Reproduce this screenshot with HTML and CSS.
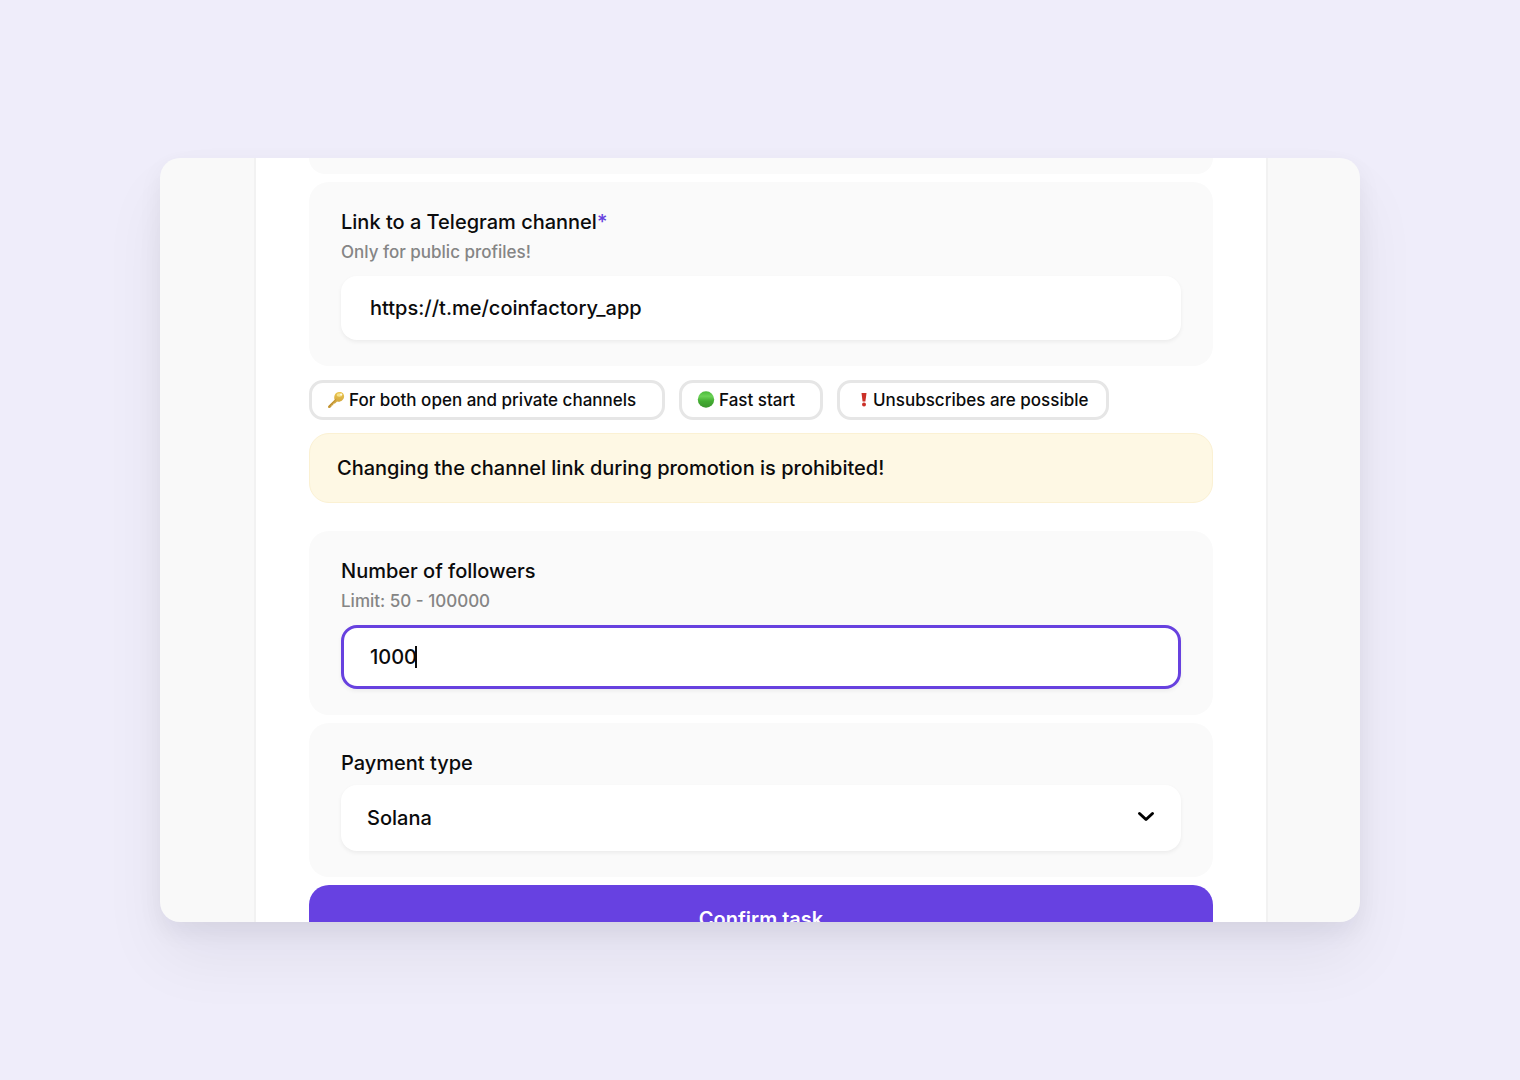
FILE: index.html
```html
<!DOCTYPE html>
<html lang="en">
<head>
<meta charset="utf-8">
<meta name="viewport" content="width=device-width, initial-scale=1">
<title>Promote a Telegram channel</title>
<link rel="stylesheet" href="styles.css">
</head>
<body>
<main class="window">
  <form class="column">
    <div class="panel panel-end"></div>
    <section class="panel">
      <label class="title" for="link">Link to a Telegram channel<span class="required">*</span></label>
      <p class="hint">Only for public profiles!</p>
      <input class="control" id="link" type="text" value="https://t.me/coinfactory_app">
    </section>
    <ul class="tags">
      <li class="tag">
        <svg class="icon" viewBox="0 0 18 18" aria-hidden="true">
          <defs><linearGradient id="gold" x1="0" y1="0" x2="0" y2="1"><stop offset="0" stop-color="#ecc64f"/><stop offset="1" stop-color="#c59635"/></linearGradient></defs>
          <path d="M1 15.200 7.600 8.700C6.400 5 8.400 1.300 12 1c3.200-.3 5.300 1.800 5.100 4.800-.3 3.400-3.700 5.700-7 4.800l-2.100 2-1.600.1-.2 1.500-1.500.2-.3 1.300-1.600 1.300-1.700-.2z" fill="url(#gold)"/>
          <path d="m2 15.300 7.200-7" stroke="#a97b2c" stroke-width=".7"/>
          <ellipse cx="12.400" cy="4" rx="2.800" ry="1.700" fill="#f7e38c"/>
          <circle cx="14.200" cy="3.500" r="1.100" fill="#fffbe6"/>
        </svg>
        For both open and private channels
      </li>
      <li class="tag">
        <svg class="icon" viewBox="0 0 18 18" aria-hidden="true">
          <defs><linearGradient id="green" x1="0" y1="0" x2="0" y2="1"><stop offset="0" stop-color="#49b83a"/><stop offset=".3" stop-color="#6bd256"/><stop offset=".6" stop-color="#43ac32"/><stop offset="1" stop-color="#3b962c"/></linearGradient></defs>
          <circle cx="9" cy="8.500" r="8.200" fill="url(#green)"/>
        </svg>
        Fast start
      </li>
      <li class="tag tag-tight">
        <svg class="icon" viewBox="0 0 18 18" aria-hidden="true">
          <path d="M6.500 2h5l-1.100 8.500H7.600z" fill="#cb3028"/>
          <circle cx="9" cy="13.400" r="2" fill="#cb3028"/>
        </svg>
        Unsubscribes are possible
      </li>
    </ul>
    <p class="notice">Changing the channel link during promotion is prohibited!</p>
    <section class="panel">
      <label class="title" for="count">Number of followers</label>
      <p class="hint">Limit: 50 - 100000</p>
      <div class="field">
        <input class="control active" id="count" type="text" inputmode="numeric" value="1000">
        <span class="caret"></span>
      </div>
    </section>
    <section class="panel">
      <label class="title title-only" for="payment">Payment type</label>
      <div class="field">
        <select class="control" id="payment"><option>Solana</option></select>
        <svg class="chevron" viewBox="0 0 18 12" aria-hidden="true"><path d="m2.500 2.500 6.500 6 6.500-6" fill="none" stroke="#000" stroke-width="3" stroke-linecap="round" stroke-linejoin="round"/></svg>
      </div>
    </section>
    <button class="submit" type="button">Confirm task</button>
  </form>
</main>
</body>
</html>
```
FILE: styles.css
```css
* {
  box-sizing: border-box;
}

body {
  display: flex;
  height: 100vh;
  margin: 0;
  padding: 158px 160px;
  background: #efedfa;
  color: #0b0b0c;
  font-family: Inter, "Liberation Sans", sans-serif;
  font-size: 20px;
  font-weight: 500;
  line-height: 24px;
}

.window {
  flex: 1;
  overflow: hidden;
  padding: 0 92px 0 94px;
  border-radius: 20px;
  background: #f9f9f9;
  box-shadow: 0 10px 24px rgba(20, 16, 30, 0.06), 0 36px 64px rgba(20, 16, 30, 0.06);
}

.column {
  display: flex;
  flex-direction: column;
  gap: 8px;
  padding: 0 53px;
  border: solid #f2f2f2;
  border-width: 0 2px;
  background: #fff;
}

.panel {
  display: flex;
  flex-direction: column;
  padding: 28px 32px 26px;
  border-radius: 20px;
  background: #fafafa;
}

.panel-end {
  height: 16px;
  padding: 0;
  border-radius: 0 0 20px 20px;
}

.title {
  margin-bottom: 6px;
}

.title-only {
  margin-bottom: 10px;
}

.required {
  color: #6741df;
}

.hint {
  margin: 0 0 12px;
  color: #858585;
  font-size: 17px;
}

.control {
  display: block;
  width: 100%;
  height: 64px;
  padding: 0 29px;
  border: 0;
  border-radius: 16px;
  outline: 0;
  background: #fff;
  box-shadow: 0 2px 4px rgba(0, 0, 0, 0.06);
  color: inherit;
  font: inherit;
}

.active {
  padding: 0 26px;
  border: 3px solid #6741df;
}

select.control {
  height: 66px;
  padding: 0 26px;
  appearance: none;
}

.field {
  position: relative;
}

.caret {
  position: absolute;
  top: 21px;
  left: 74px;
  width: 2px;
  height: 22px;
  background: #0b0b0c;
}

.chevron {
  position: absolute;
  top: 26px;
  right: 26px;
  width: 18px;
  height: 12px;
}

.tags {
  display: grid;
  grid-template-columns: 356px 144px 272px;
  gap: 14px;
  margin: 6px 0 5px;
  padding: 0;
  list-style: none;
}

.tag {
  display: flex;
  align-items: center;
  gap: 4px;
  height: 40px;
  padding: 0 15px;
  border: 3px solid #e6e6e6;
  border-radius: 14px;
  font-size: 17px;
  white-space: nowrap;
}

.tag-tight {
  gap: 0;
}

.icon {
  width: 18px;
  height: 18px;
}

.notice {
  margin: 0 0 20px;
  padding: 22px 27px;
  border: 1px solid #fbf1d3;
  border-radius: 20px;
  background: #fef8e4;
}

.submit {
  height: 68px;
  border: 0;
  border-radius: 20px;
  background: #6741e1;
  color: #fff;
  font: inherit;
  font-weight: 600;
}
```
